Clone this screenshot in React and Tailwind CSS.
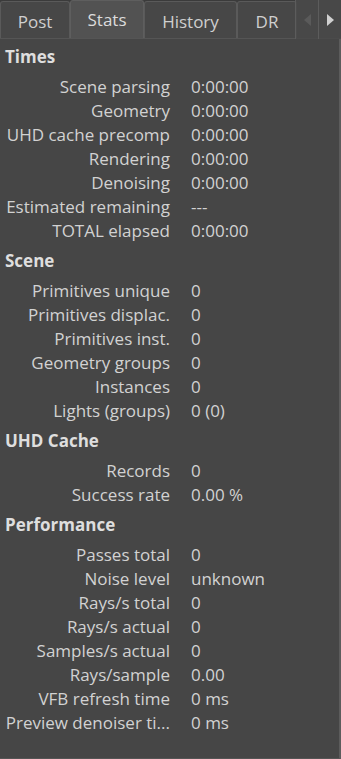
import React from 'react';

const sections = [
  {
    title: 'Times',
    rows: [
      ['Scene parsing', '0:00:00'],
      ['Geometry', '0:00:00'],
      ['UHD cache precomp', '0:00:00'],
      ['Rendering', '0:00:00'],
      ['Denoising', '0:00:00'],
      ['Estimated remaining', '---'],
      ['TOTAL elapsed', '0:00:00'],
    ],
  },
  {
    title: 'Scene',
    rows: [
      ['Primitives unique', '0'],
      ['Primitives displac.', '0'],
      ['Primitives inst.', '0'],
      ['Geometry groups', '0'],
      ['Instances', '0'],
      ['Lights (groups)', '0 (0)'],
    ],
  },
  {
    title: 'UHD Cache',
    rows: [
      ['Records', '0'],
      ['Success rate', '0.00 %'],
    ],
  },
  {
    title: 'Performance',
    rows: [
      ['Passes total', '0'],
      ['Noise level', 'unknown'],
      ['Rays/s total', '0'],
      ['Rays/s actual', '0'],
      ['Samples/s actual', '0'],
      ['Rays/sample', '0.00'],
      ['VFB refresh time', '0 ms'],
      ['Preview denoiser ti...', '0 ms'],
    ],
  },
];

const tabs = [
  { name: 'Post', w: 'w-[70px]' },
  { name: 'Stats', w: 'w-[74px]', active: true },
  { name: 'History', w: 'w-[93px]' },
  { name: 'DR', w: 'w-[60px]' },
];

export default function App() {
  return (
    <div
      className="w-[341px] h-[759px] bg-[#3b3b3b] flex flex-col overflow-hidden text-[#d2d2d2]"
      style={{ fontFamily: '"Open Sans", "Noto Sans", sans-serif' }}
    >
      <div className="h-[38px] flex relative shrink-0">
        {tabs.map((t) => (
          <div
            key={t.name}
            className={
              t.active
                ? `${t.w} mt-0 h-[38px] bg-[#525252] border border-b-0 border-[#5e5e5e] rounded-t-[3px] flex items-center justify-center text-[17px] text-[#dcdcdc]`
                : `${t.w} mt-[1px] h-[37px] bg-[#474747] border border-b-0 border-[#5a5a5a] rounded-t-[3px] flex items-center justify-center text-[17px] text-[#cfcfcf] pt-[3px]`
            }
          >
            {t.name}
          </div>
        ))}
        <div className="absolute right-0 top-0 h-[39px] w-[46px] flex bg-[#4a4a4a]/90 border-l border-[#5c5c5c]">
          <div className="flex-1 flex items-center justify-center border-r border-[#5c5c5c]">
            <svg width="7" height="12" viewBox="0 0 7 12">
              <path d="M7 0 L0 6 L7 12 Z" fill="#5a5a5a" />
            </svg>
          </div>
          <div className="flex-1 flex items-center justify-center">
            <svg width="7" height="12" viewBox="0 0 7 12">
              <path d="M0 0 L7 6 L0 12 Z" fill="#d0d0d0" />
            </svg>
          </div>
        </div>
      </div>
      <div className="flex-1 bg-[#464646] border-t border-r-2 border-b border-[#555555] border-r-[#5c5c5c]">
        {sections.map((s) => (
          <div key={s.title}>
            <div className="h-9 flex items-center pl-[5px] font-bold text-[17px] text-[#dedede]">
              {s.title}
            </div>
            {s.rows.map(([label, value]) => (
              <div key={label} className="h-6 flex items-center text-[17px]">
                <div className="w-[170px] text-right whitespace-nowrap">{label}</div>
                <div className="pl-[21px] whitespace-nowrap">{value}</div>
              </div>
            ))}
          </div>
        ))}
      </div>
    </div>
  );
}
